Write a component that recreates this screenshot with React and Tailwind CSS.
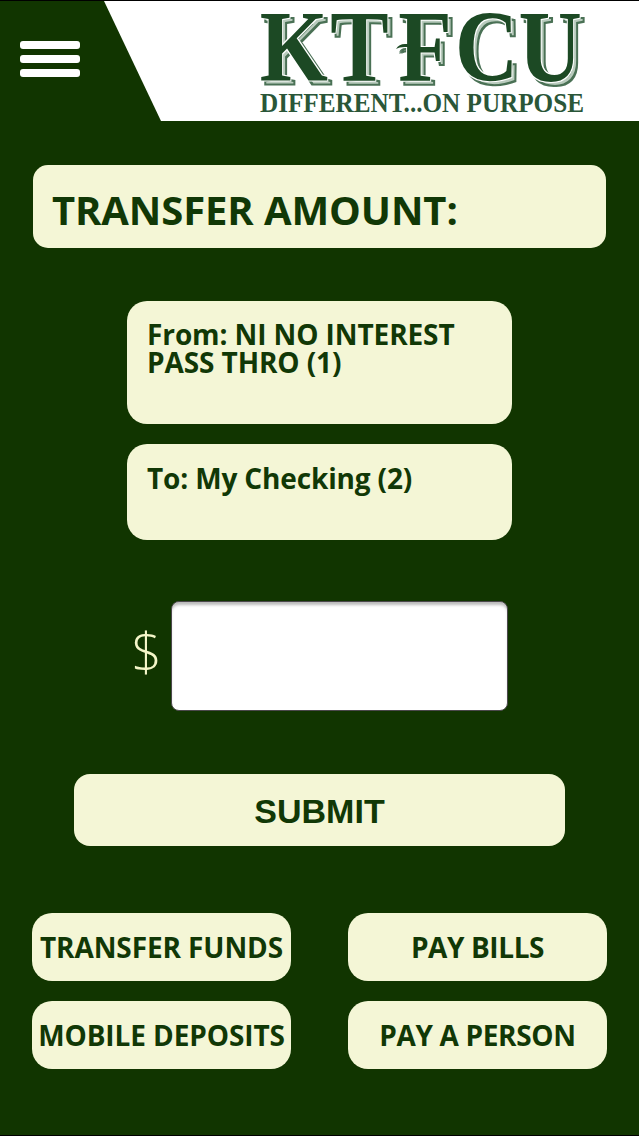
import { useState } from 'react';

const QUICK_LINKS = [
  { label: 'TRANSFER FUNDS', className: 'tracking-[-0.1px]' },
  { label: 'PAY BILLS', className: 'tracking-[-0.4px]' },
  { label: 'MOBILE DEPOSITS', className: 'tracking-[-0.1px]' },
  { label: 'PAY A PERSON', className: 'tracking-[-0.35px]' },
];

/**
 * Logo - Wordmark with an offset outline behind each letter
 */
const Logo = () => (
  <svg
    className="block h-[119px] w-[535px] font-['Liberation_Serif',serif] font-bold"
    viewBox="104 1 535 119"
  >
    <defs>
      {/* White gap around the letter, then a pale copy with a dark edge below it */}
      <filter id="inline-shadow" x="-5%" y="-10%" width="115%" height="130%" colorInterpolationFilters="sRGB">
        <feOffset in="SourceAlpha" dx="4" dy="4" result="shifted" />
        <feMorphology in="shifted" operator="dilate" radius="0.6" result="outer" />
        <feFlood floodColor="#4a7155" />
        <feComposite in2="outer" operator="in" result="edge" />
        <feMorphology in="shifted" operator="erode" radius="0.6" result="inner" />
        <feFlood floodColor="#b9cbbd" />
        <feComposite in2="inner" operator="in" result="fill" />
        <feMorphology in="SourceAlpha" operator="dilate" radius="1" result="wide" />
        <feFlood floodColor="#ffffff" />
        <feComposite in2="wide" operator="in" result="gap" />
        <feMerge>
          <feMergeNode in="edge" />
          <feMergeNode in="fill" />
          <feMergeNode in="gap" />
          <feMergeNode in="SourceGraphic" />
        </feMerge>
      </filter>
    </defs>
    <g filter="url(#inline-shadow)" fill="#1c4924">
      <text transform="scale(0.86 1)" x="302 384 463 529 603" y="81" fontSize="102">
        KTFCU
      </text>
      {/* Flourish on the crossbar of the F */}
      <path d="M396 49q3-5 9-5h6v3h-6q-6 0-9 2z" />
    </g>
    <text
      x="260"
      y="112"
      fontSize="26.5"
      fill="#2a5638"
      textLength="324"
      lengthAdjust="spacingAndGlyphs"
    >
      DIFFERENT...ON PURPOSE
    </text>
  </svg>
);

const MenuButton = () => (
  <button type="button" aria-label="Menu" className="flex flex-col gap-1.5 pt-10 pl-5">
    <span className="block h-2 w-[60px] rounded-[3px] bg-white" />
    <span className="block h-2 w-[60px] rounded-[3px] bg-white" />
    <span className="block h-2 w-[60px] rounded-[3px] bg-white" />
  </button>
);

const App = () => {
  const [amount, setAmount] = useState('');

  return (
    <div className="flex h-[1136px] w-[639px] flex-col border-y border-black bg-[#113500] font-['Open_Sans',sans-serif] font-bold text-[#113806]">
      {/* Header */}
      <header className="flex h-[120px] items-start">
        <div className="w-[104px] shrink-0">
          <MenuButton />
        </div>
        <div className="bg-white pb-px [clip-path:polygon(0_0,100%_0,100%_100%,57px_100%)]">
          <Logo />
        </div>
      </header>

      <main className="flex flex-col items-center">
        <h1 className="mt-11 flex h-[83px] w-[573px] items-center rounded-[15px] bg-[#f4f6d6] pt-1.5 pl-[19px] text-[40px] leading-none tracking-[-0.1px]">
          TRANSFER AMOUNT:
        </h1>

        {/* Accounts */}
        <div className="mt-[53px] h-[123px] w-[385px] rounded-[20px] bg-[#f4f6d6] px-5 pt-[19px] text-[28px] leading-7 tracking-[-0.1px]">
          From: NI NO INTEREST PASS THRO (1)
        </div>
        <div className="mt-5 h-24 w-[385px] rounded-[20px] bg-[#f4f6d6] px-5 pt-5 text-[28px] leading-7 tracking-[-0.15px]">
          To: My Checking (2)
        </div>

        {/* Amount */}
        <label className="mt-[61px] flex w-[376px] items-center">
          <span className="w-[39px] pb-3 text-[53px] leading-none font-light text-[#f4f6c8]">$</span>
          <input
            type="text"
            value={amount}
            onChange={(e) => setAmount(e.target.value)}
            className="h-[110px] w-[337px] rounded-lg border border-[#4b484b] bg-white px-4 text-[40px] shadow-[inset_0_4px_3px_-1px_#bbbbbb] outline-none"
          />
        </label>

        <button
          type="button"
          className="mt-[62.5px] h-[72px] w-[491px] rounded-[16px] bg-[#f4f6d6] pt-0.5 font-['Liberation_Sans',sans-serif] text-[34px] leading-none"
        >
          SUBMIT
        </button>

        {/* Quick links */}
        <nav className="mt-[67.5px] grid grid-cols-[259px_259px] gap-x-[57px] gap-y-5">
          {QUICK_LINKS.map(({ label, className }) => (
            <button
              key={label}
              type="button"
              className={`h-[68px] rounded-[20px] bg-[#f4f6d6] text-[28px] leading-none whitespace-nowrap ${className}`}
            >
              {label}
            </button>
          ))}
        </nav>
      </main>
    </div>
  );
};

export default App;
